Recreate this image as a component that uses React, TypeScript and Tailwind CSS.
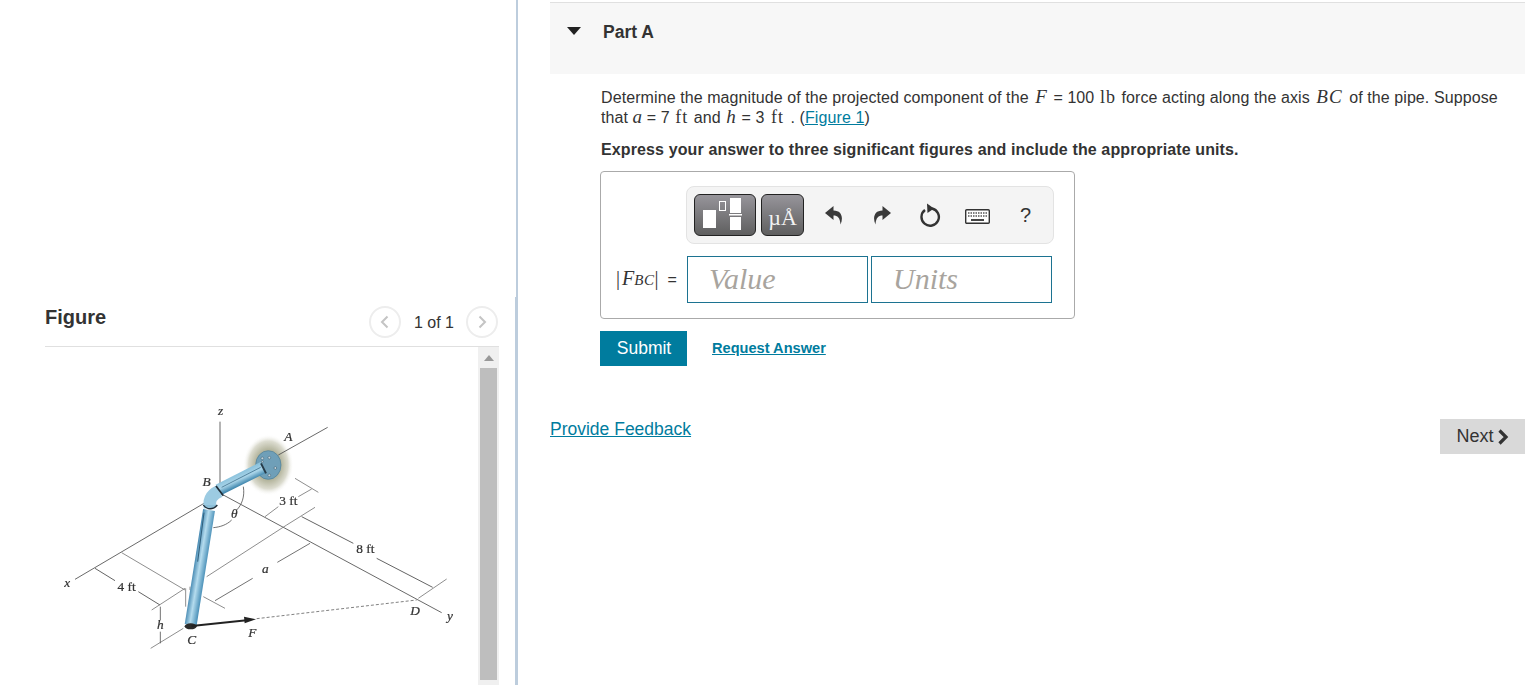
const serif = "font-['Liberation_Serif',serif]";
const mathI = "font-['Liberation_Serif',serif] italic text-[19px] leading-[14px]";
const mathR = "font-['Liberation_Serif',serif] text-[18px] leading-[14px] tracking-[1px]";

function PipeFigure() {
  return (
    <svg viewBox="135 0 1305 885" className="w-[435px] h-[295px] shrink-0 blur-[0.5px]">
      <defs>
        <radialGradient id="glow">
          <stop offset="0.5" stopColor="#b4b59d" />
          <stop offset="0.78" stopColor="#dcdcd0" />
          <stop offset="1" stopColor="#ffffff" stopOpacity="0" />
        </radialGradient>
        <linearGradient id="pipeLong" gradientUnits="userSpaceOnUse" x1="582" y1="529" x2="618" y2="535">
          <stop offset="0" stopColor="#4b8db5" />
          <stop offset="0.45" stopColor="#b5dcee" />
          <stop offset="1" stopColor="#4a90b8" />
        </linearGradient>
        <linearGradient id="pipeTop" gradientUnits="userSpaceOnUse" x1="715" y1="250" x2="730" y2="282">
          <stop offset="0" stopColor="#8cc3dd" />
          <stop offset="0.5" stopColor="#a9d4e8" />
          <stop offset="1" stopColor="#3f86ad" />
        </linearGradient>
      </defs>
      <ellipse cx="805" cy="225" rx="76" ry="92" fill="url(#glow)" />
      <g fill="none" stroke="#4a4a4a" strokeWidth="2.5">
        <path d="M225 568L612 340M835 195L983 112" />
        <path d="M670 315L1325 668" />
        <path d="M660 95V290" />
      </g>
      <g fill="none" stroke="#777" strokeWidth="2.5">
        <path d="M885 265L955 307M935 297L895 320M835 350L795 380" />
        <path d="M945 352L860 405L620 560" />
        <path d="M905 380L1060 460M1130 505L1298 592" stroke="#444" />
        <path d="M1340 567L1255 625" />
        <path d="M930 460L832 517M758 565L645 632" stroke="#555" />
        <path d="M365 488L555 600M610 620L675 655" />
        <path d="M285 535L345 572M415 605L480 645" stroke="#444" />
        <path d="M555 595L455 660M550 715L452 775" />
        <path d="M481 650V690M481 725V760" stroke="#555" />
        <path d="M557 595V650M570 590V600" />
        <path d="M730 290C735 320 725 345 710 360M695 390C680 405 660 411 640 413" stroke="#555" />
      </g>
      <path d="M770 686L1250 630" stroke="#666" strokeWidth="2.5" strokeDasharray="9 6" />
      <ellipse cx="805" cy="225" rx="38" ry="43" fill="#6f9fb8" stroke="#4b7d96" strokeWidth="2" />
      <g fill="#c9d6dc" stroke="#33566a" strokeWidth="1.5">
        <circle cx="787" cy="205" r="4" />
        <circle cx="808" cy="203" r="4" />
        <circle cx="826" cy="234" r="4" />
        <circle cx="808" cy="256" r="4" />
        <circle cx="787" cy="215" r="3" />
      </g>
      <path d="M655 300L790 232" stroke="url(#pipeTop)" strokeWidth="36" />
      <path d="M665 292L782 232" stroke="#2f5f7c" strokeWidth="2" />
      <path d="M783 220L798 250" stroke="#263b48" strokeWidth="6" />
      <path d="M630 352C625 325 640 310 660 303" fill="none" stroke="#9ccbe2" strokeWidth="38" />
      <path d="M648 288L670 317" stroke="#1f2c36" strokeWidth="5" />
      <path d="M627 360L572 705" stroke="url(#pipeLong)" strokeWidth="36" />
      <path d="M610 345C620 360 640 360 652 345" fill="#8dbfd8" stroke="#1f2c36" strokeWidth="4" />
      <path d="M612 368L593 515" stroke="#2f5f7c" strokeWidth="3" />
      <ellipse cx="572" cy="709" rx="18" ry="9" fill="#2b2b2b" />
      <path d="M575 708L740 691" stroke="#222" strokeWidth="6" />
      <path d="M732 680L768 688L734 700Z" fill="#222" />
      <g className={serif} fill="#333" stroke="#333" strokeWidth="0.7" fontSize="40" fontStyle="italic" textAnchor="middle">
        <text x="202" y="592">x</text>
        <text x="662" y="76">z</text>
        <text x="865" y="152">A</text>
        <text x="620" y="288">B</text>
        <text x="703" y="384">θ</text>
        <text x="796" y="549">a</text>
        <text x="481" y="716">h</text>
        <text x="575" y="762">C</text>
        <text x="757" y="740">F</text>
        <text x="1245" y="675">D</text>
        <text x="1350" y="690">y</text>
      </g>
      <g className={serif} fill="#333" stroke="#333" strokeWidth="0.7" fontSize="40" textAnchor="middle">
        <text x="865" y="345">3 ft</text>
        <text x="1096" y="488">8 ft</text>
        <text x="380" y="603">4 ft</text>
      </g>
    </svg>
  );
}

function NavButton({ d }: { d: string }) {
  return (
    <button className="w-8 h-8 rounded-full border-2 border-[#ededed] bg-white flex items-center justify-center">
      <svg viewBox="0 0 16 16" className="w-4 h-4">
        <path d={d} fill="none" stroke="#c4c4c4" strokeWidth="2" />
      </svg>
    </button>
  );
}

function Toolbar() {
  return (
    <div className="ml-[85px] w-[368px] h-[58px] rounded-lg border border-[#e3e3e3] bg-[#f4f4f4] flex items-center pl-[7px]">
      <div className="w-[62px] h-[42px] rounded-md border border-[#222] bg-gradient-to-b from-[#97959b] to-[#5f5f5f] shrink-0 overflow-hidden">
        <svg viewBox="1 1 60 40" className="w-[60px] h-[40px]">
          <rect x="9" y="16" width="13" height="18" fill="#fff" />
          <rect x="25.500" y="7.500" width="6" height="9" fill="none" stroke="#fff" />
          <rect x="36" y="4" width="11" height="15" fill="#fff" />
          <rect x="35" y="20" width="13" height="1.500" fill="#fff" />
          <rect x="36" y="23" width="11" height="13" fill="#fff" />
        </svg>
      </div>
      <div className={`ml-[5px] w-[43px] h-[42px] rounded-md border border-[#222] bg-gradient-to-b from-[#97959b] to-[#5f5f5f] shrink-0 text-[#f2f2f2] text-center text-[22px] leading-[46px] ${serif}`}>
        µÅ
      </div>
      <svg viewBox="0 0 18 20" className="ml-[21px] w-[18px] h-[20px] shrink-0">
        <path d="M8.500 1L0 8L8.500 15V10.500C12.500 10.500 15 12.500 15.500 19.500C18.500 13 17 5.500 8.500 5.500Z" fill="#3a3a3a" />
      </svg>
      <svg viewBox="0 0 18 20" className="ml-[30px] w-[18px] h-[20px] shrink-0">
        <path d="M9.500 1L18 8L9.500 15V10.500C5.500 10.500 3 12.500 2.500 19.500C-0.500 13 1 5.500 9.500 5.500Z" fill="#3a3a3a" />
      </svg>
      <svg viewBox="0 0 22 24" className="ml-[28px] w-[22px] h-[24px] shrink-0">
        <path d="M13 5.500A8.700 8.700 0 1 1 6 7" fill="none" stroke="#333" strokeWidth="2.400" />
        <path d="M8 0.500L15 5.500L8.500 10Z" fill="#333" />
      </svg>
      <svg viewBox="0 0 25 15" className="ml-[24px] mt-[3px] w-[25px] h-[15px] shrink-0">
        <rect x="0.700" y="0.700" width="23.600" height="13.600" rx="1" fill="#fff" stroke="#333" strokeWidth="1.400" />
        <path d="M3 4H22M3 7H22" stroke="#555" strokeWidth="1.600" strokeDasharray="1.500 1" />
        <path d="M6 11H19" stroke="#444" strokeWidth="2" />
      </svg>
      <span className="ml-[30px] text-[20px] text-[#333] leading-none">?</span>
    </div>
  );
}

function AnswerInput({ label }: { label: string }) {
  return (
    <div className={`w-[181px] h-[47px] border border-[#1c7391] bg-white pl-[21px] text-[30px] italic leading-[44px] text-[#a8a49e] ${serif}`}>
      {label}
    </div>
  );
}

export default function App() {
  return (
    <div className="w-[1528px] h-[685px] overflow-hidden bg-white flex font-['Liberation_Sans',Arial,sans-serif] text-[#333]">
      {/* Figure panel */}
      <div className="w-[515px] shrink-0 pl-[45px] pt-[304px]">
        <div className="w-[454px] h-[43px] border-b border-[#e0e0e0] flex items-start justify-between">
          <h2 className="text-[20px] font-bold leading-[26px]">Figure</h2>
          <div className="flex items-center pr-px">
            <NavButton d="M10.500 2.500L5 8L10.500 13.500" />
            <span className="ml-[13px] mr-[12px] text-base leading-[34px] pt-[2px]">1 of 1</span>
            <NavButton d="M5.500 2.500L11 8L5.500 13.500" />
          </div>
        </div>
        <div className="w-[454px] flex">
          <div className="w-[433px] pt-[43px]">
            <PipeFigure />
          </div>
          <div className="w-[21px] h-[338px] bg-[#f0f0f0] flex flex-col items-center">
            <div className="mt-[8px] w-0 h-0 border-x-[5px] border-x-transparent border-b-[6px] border-b-[#999]" />
            <div className="mt-[7px] w-[17px] h-[312px] bg-[#bebebe]" />
          </div>
        </div>
      </div>

      {/* Divider */}
      <div className="w-[3px] shrink-0 bg-[#bdcddd]">
        <div className="w-px h-[297px] bg-white" />
      </div>

      {/* Question panel */}
      <div className="w-[1007px] shrink-0 pl-[32px] pt-[2px]">
        <div className="h-[72px] border-t border-[#e0e0e0] bg-[#f7f7f7] flex pt-[19px]">
          <div className="ml-[17px] mt-[5px] w-0 h-0 border-x-[7px] border-x-transparent border-t-[8px] border-t-[#222]" />
          <h3 className="ml-[22px] text-[17.500px] font-bold leading-5">Part A</h3>
        </div>

        <div className="pl-[51px] pr-[24px] pt-[14px]">
          <p className="text-base leading-5 tracking-[0.09px]">
            Determine the magnitude of the projected component of the{" "}
            <span className={`${mathI} mx-[2px]`}>F</span> = 100{" "}
            <span className={`${mathR} mx-[1px]`}>lb</span> force acting along the axis{" "}
            <span className={`${mathI} mx-[2px] tracking-[1px]`}>BC</span> of the pipe. Suppose that{" "}
            <span className={mathI}>a</span> = 7{" "}
            <span className={`${mathR} mx-[1px]`}>ft</span> and{" "}
            <span className={`${mathI} mx-[1px]`}>h</span> = 3{" "}
            <span className={`${mathR} mx-[2px]`}>ft</span> . (
            <a href="#" className="text-[#007c9e] underline">Figure 1</a>)
          </p>
          <p className="mt-3 text-base font-bold leading-5 tracking-[0.12px]">
            Express your answer to three significant figures and include the appropriate units.
          </p>

          {/* Answer box */}
          <div className="mt-[11px] -ml-px w-[475px] h-[148px] rounded border border-[#aaaaaa] pt-[14px]">
            <Toolbar />
            <div className="mt-3 flex items-center">
              <span className={`w-[86px] pl-[15px] text-[20px] whitespace-nowrap leading-none ${serif}`}>
                |<i className="pl-[2px]">F</i><i className="text-[15px] tracking-[0.5px]">BC</i>|<span className="font-['Liberation_Sans'] text-base pl-[9px]">=</span>
              </span>
              <AnswerInput label="Value" />
              <div className="w-[3px]" />
              <AnswerInput label="Units" />
            </div>
          </div>

          <div className="mt-3 -ml-px flex items-center">
            <button className="w-[87px] h-[35px] pl-px bg-[#007c9e] text-white text-[17.500px]">Submit</button>
            <a href="#" className="ml-[25px] text-[14.600px] font-bold text-[#007c9e] underline">Request Answer</a>
          </div>
        </div>

        <div className="mt-[53px] flex items-start justify-between">
          <a href="#" className="text-[17.500px] leading-[21px] text-[#007c9e] underline">Provide Feedback</a>
          <button className="w-[85px] h-[35px] bg-[#d9d9d9] text-[18px] flex items-center justify-center gap-[3px]">
            Next
            <svg viewBox="0 0 12 16" className="w-[12px] h-[16px]">
              <path d="M2.500 1.500L9 8L2.500 14.500" fill="none" stroke="#333" strokeWidth="3.200" />
            </svg>
          </button>
        </div>
      </div>
    </div>
  );
}
